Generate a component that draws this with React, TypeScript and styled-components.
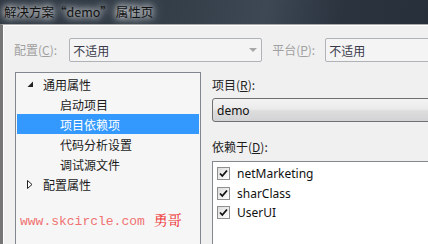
import styled, { createGlobalStyle } from 'styled-components'

const GlobalStyle = createGlobalStyle`
  html, body {
    margin: 0;
    padding: 0;
    width: 428px;
    height: 244px;
    overflow: hidden;
    background: #f0f0f0;
  }
  body {
    font-family: "Noto Sans CJK SC", "Noto Sans", sans-serif;
    font-size: 12px;
  }
`

const Window = styled.div`
  display: flex;
  flex-direction: column;
  width: 428px;
  height: 244px;
  overflow: hidden;
`

const TitleBar = styled.div`
  height: 24px;
  flex-shrink: 0;
  display: flex;
  align-items: center;
  padding-left: 4px;
  background: linear-gradient(100deg, #2b343f 0%, #35404b 45%, #3d4854 62%, #2a333e 80%, #27303a 100%);
`

const Title = styled.span`
  color: #111;
  font-size: 12.5px;
  line-height: 16px;
  text-shadow: 0 0 6px rgba(255, 255, 255, 0.95), 0 0 10px rgba(255, 255, 255, 0.8),
    0 0 16px rgba(220, 225, 230, 0.7);
`

const Body = styled.div`
  flex: 1;
  display: flex;
  flex-direction: column;
  background: #f0f0f0;
  border-top: 1px solid #a9a9a9;
  border-left: 3px solid #767676;
  box-shadow: inset 1px 1px 0 #ffffff;
`

const ConfigRow = styled.div`
  display: flex;
  align-items: center;
  padding: 13px 0 0 11px;
  height: 24px;
`

const Label = styled.span<{ disabled?: boolean }>`
  color: ${({ disabled }) => (disabled ? '#a0a0a0' : '#1e1e1e')};
  white-space: nowrap;
  line-height: 18px;
`

const PlatformLabel = styled(Label)`
  margin-left: 10px;
`

const DisabledCombo = styled.div<{ width: number; gap: number }>`
  box-sizing: border-box;
  flex-shrink: 0;
  width: ${({ width }) => width}px;
  height: 24px;
  margin-left: ${({ gap }) => gap}px;
  display: flex;
  align-items: center;
  justify-content: space-between;
  padding: 0 4px 0 3px;
  background: #f4f4f4;
  border: 1px solid #afb3b7;
  border-radius: 2px;
  color: #3a3a4a;
`

const Arrow = styled.span<{ color: string }>`
  width: 0;
  height: 0;
  border-left: 4px solid transparent;
  border-right: 4px solid transparent;
  border-top: 4px solid ${({ color }) => color};
`

const Main = styled.div`
  flex: 1;
  display: flex;
  margin-top: 10px;
  padding-left: 12px;
  min-height: 0;
`

const Tree = styled.div`
  box-sizing: border-box;
  width: 186px;
  flex-shrink: 0;
  height: 200px;
  background: #f6f6f6;
  border: 1px solid #828790;
  padding: 1px 1px 0;
`

const TreeRow = styled.div<{ level: number; selected?: boolean }>`
  display: flex;
  align-items: center;
  height: 20px;
  padding-left: ${({ level }) => (level === 0 ? 10 : 43)}px;
  background: ${({ selected }) => (selected ? '#3399ff' : 'transparent')};
  color: ${({ selected }) => (selected ? '#ffffff' : '#1a1a1a')};
`

const Expander = styled.span`
  width: 14px;
  height: 9px;
  margin-right: 2px;
  display: flex;
  align-items: center;
`

const Watermark = styled.div`
  display: flex;
  align-items: baseline;
  margin: 15px 0 0 3px;
  font-family: "Liberation Mono", "Noto Sans CJK SC", monospace;
  font-size: 13px;
  color: #f07272;
  white-space: nowrap;
`

const Author = styled.span`
  margin-left: 9px;
  font-size: 14px;
  color: #ee3030;
  font-family: "Noto Serif CJK SC", "Noto Sans CJK SC", serif;
`

const RightPanel = styled.div`
  flex: 1;
  display: flex;
  flex-direction: column;
  margin-left: 11px;
  padding-top: 4px;
`

const ProjectCombo = styled.div`
  box-sizing: border-box;
  height: 24px;
  margin: 4px -40px 0 0;
  display: flex;
  align-items: center;
  padding-left: 4px;
  border: 1px solid #707070;
  border-radius: 3px;
  background: linear-gradient(#f3f3f3 0%, #ebebeb 45%, #dddddd 55%, #d2d3d6 100%);
  color: #111;
  font-family: "Noto Sans", sans-serif;
  font-size: 12px;
`

const DepLabel = styled(Label)`
  margin-top: 16px;
`

const ListBox = styled.div`
  box-sizing: border-box;
  height: 100px;
  margin: 5px -40px 0 0;
  padding-top: 2px;
  background: #ffffff;
  border: 1px solid #828790;
`

const ListItem = styled.label`
  display: flex;
  align-items: center;
  height: 19.5px;
  padding-left: 4px;
  color: #111;
  font-family: "Noto Sans", sans-serif;
  font-size: 12px;
`

const CheckBox = styled.span`
  box-sizing: border-box;
  width: 13px;
  height: 13px;
  margin-right: 7px;
  border: 1px solid #8e8f8f;
  background: linear-gradient(135deg, #dcdcdc, #ffffff);
  display: flex;
  align-items: center;
  justify-content: center;
`

function Check() {
  return (
    <svg width="9" height="9" viewBox="0 0 9 9">
      <path d="M1 4.5 L3.3 7 L8 1.5" fill="none" stroke="#111" strokeWidth="1.8" />
    </svg>
  )
}

const treeItems = [
  { label: '通用属性', level: 0, open: true },
  { label: '启动项目', level: 1 },
  { label: '项目依赖项', level: 1, selected: true },
  { label: '代码分析设置', level: 1 },
  { label: '调试源文件', level: 1 },
  { label: '配置属性', level: 0, open: false },
]

const deps = ['netMarketing', 'sharClass', 'UserUI']

export default function App() {
  return (
    <Window>
      <GlobalStyle />
      <TitleBar>
        <Title>解决方案“demo” 属性页</Title>
      </TitleBar>
      <Body>
        <ConfigRow>
          <Label disabled>
            配置(<u>C</u>):
          </Label>
          <DisabledCombo width={193} gap={12}>
            <span>不适用</span>
            <Arrow color="#a8a8a8" />
          </DisabledCombo>
          <PlatformLabel disabled>
            平台(<u>P</u>):
          </PlatformLabel>
          <DisabledCombo width={140} gap={10}>
            <span>不适用</span>
          </DisabledCombo>
        </ConfigRow>
        <Main>
          <Tree>
            {treeItems.map((item) => (
              <TreeRow key={item.label} level={item.level} selected={item.selected}>
                {item.level === 0 && (
                  <Expander>
                    {item.open ? (
                      <svg width="7" height="7" viewBox="0 0 7 7">
                        <path d="M6 0.5 L6 6 L0.5 6 Z" fill="#222" />
                      </svg>
                    ) : (
                      <svg width="6" height="9" viewBox="0 0 6 9">
                        <path d="M0.5 0.5 L5 4.5 L0.5 8.5 Z" fill="#fff" stroke="#222" />
                      </svg>
                    )}
                  </Expander>
                )}
                {item.label}
              </TreeRow>
            ))}
            <Watermark>
              www.skcircle.com<Author>勇哥</Author>
            </Watermark>
          </Tree>
          <RightPanel>
            <Label>
              项目(<u>R</u>):
            </Label>
            <ProjectCombo>demo</ProjectCombo>
            <DepLabel>
              依赖于(<u>D</u>):
            </DepLabel>
            <ListBox>
              {deps.map((d) => (
                <ListItem key={d}>
                  <CheckBox>
                    <Check />
                  </CheckBox>
                  {d}
                </ListItem>
              ))}
            </ListBox>
          </RightPanel>
        </Main>
      </Body>
    </Window>
  )
}
